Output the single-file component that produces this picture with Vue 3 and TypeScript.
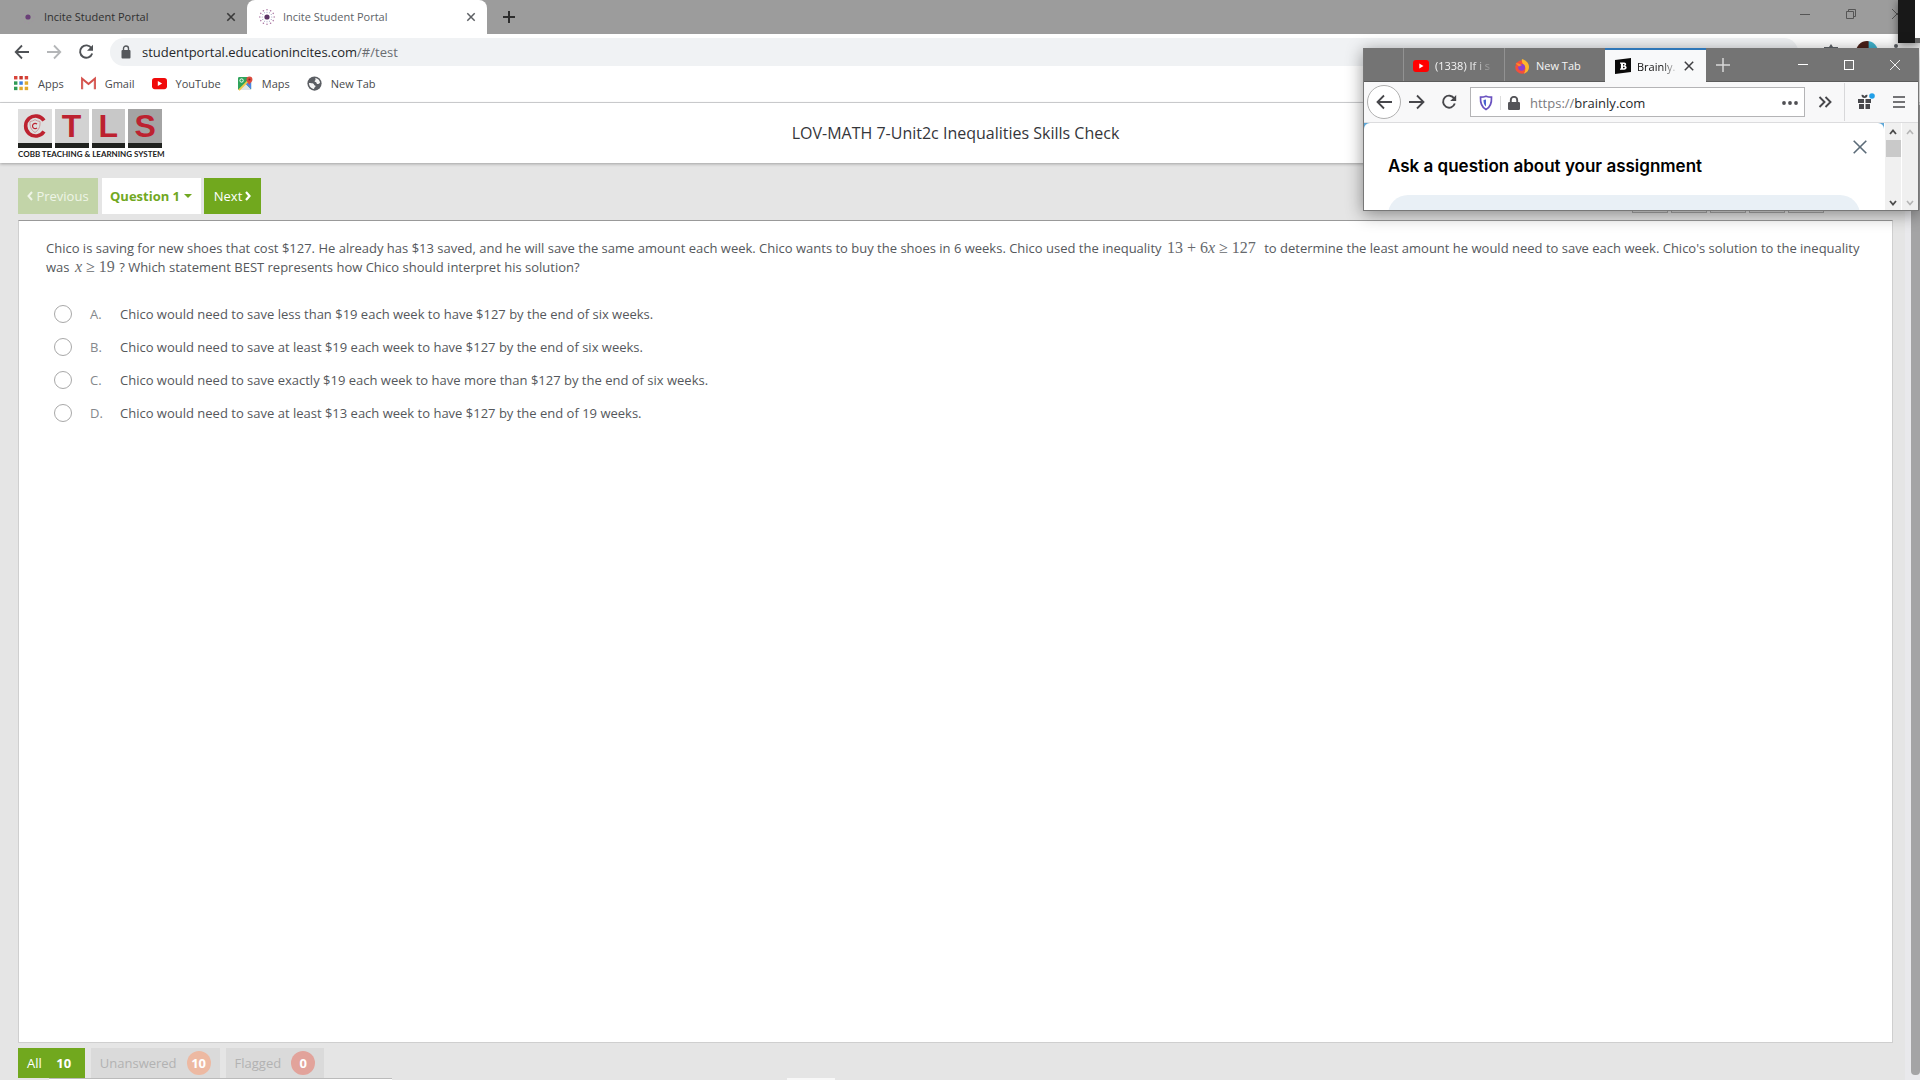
<script setup lang="ts">
import { ref } from 'vue'

interface Choice {
  key: string
  text: string
}

const choices: Choice[] = [
  { key: 'A', text: 'Chico would need to save less than $19 each week to have $127 by the end of six weeks.' },
  { key: 'B', text: 'Chico would need to save at least $19 each week to have $127 by the end of six weeks.' },
  { key: 'C', text: 'Chico would need to save exactly $19 each week to have more than $127 by the end of six weeks.' },
  { key: 'D', text: 'Chico would need to save at least $13 each week to have $127 by the end of 19 weeks.' },
]

const answer = ref<string>('')
const host = ref<string>('studentportal.educationincites.com')
const sideHost = ref<string>('brainly.com')
const question = ref<string>('Question 1')
const appDots: string[] = ['#d9453b', '#c8372d', '#d9453b', '#2f9a55', '#3b7fe0', '#e0a92c', '#2f9a55', '#e0a92c', '#e0a92c']
const ring: number[] = Array.from({ length: 12 }, (_, i) => i * 30)
</script>

<template>
  <div class="screen">
    <header class="chrome">
      <div class="tabs">
        <div class="tab">
          <svg class="fav" viewBox="0 0 18 18"><circle cx="9" cy="9" r="6" fill="none" stroke="#a590a8" stroke-width="1" stroke-dasharray="1 3" /><circle cx="9" cy="9" r="2.6" fill="#6a3f78" /></svg>
          <span class="title">Incite Student Portal</span>
          <button class="x" aria-label="Close tab"><svg viewBox="0 0 10 10"><path d="M1.3 1.3l7.4 7.4M8.7 1.3L1.3 8.7" stroke="#3a3a3a" stroke-width="1.6" /></svg></button>
        </div>
        <div class="tab active">
          <svg class="fav" viewBox="0 0 18 18">
            <g v-for="a in ring" :key="a" :transform="`rotate(${a} 9 9)`"><circle cx="9" cy="1.8" r=".8" fill="#b07fa8" /><circle cx="9" cy="4.2" r=".5" fill="#8d8fb5" /></g>
            <circle cx="9" cy="9" r="2.6" fill="#5d3566" />
          </svg>
          <span class="title">Incite Student Portal</span>
          <button class="x" aria-label="Close tab"><svg viewBox="0 0 10 10"><path d="M1.3 1.3l7.4 7.4M8.7 1.3L1.3 8.7" stroke="#5c5f63" stroke-width="1.5" /></svg></button>
        </div>
        <button class="plus" aria-label="New tab"><svg viewBox="0 0 12 12"><path d="M6 0v12M0 6h12" stroke="#2d2d2d" stroke-width="2" /></svg></button>
        <div class="winbtns">
          <button aria-label="Minimize"><svg width="12" height="12" viewBox="0 0 12 12"><path d="M1 6.500h10" stroke="#555" /></svg></button>
          <button aria-label="Restore"><svg width="12" height="12" viewBox="0 0 12 12" fill="none" stroke="#555"><path d="M1.500 3.500h7v7h-7zM3.500 3.500v-2h7v7h-2" /></svg></button>
          <button aria-label="Close"><svg width="12" height="12" viewBox="0 0 12 12"><path d="M1 1l10 10M11 1L1 11" stroke="#555" /></svg></button>
        </div>
      </div>
      <div class="toolbar">
        <button class="nav" aria-label="Back"><svg viewBox="0 0 16 16" fill="none" stroke="#4f5256" stroke-width="1.8"><path d="M15 8H2M8 1.500L1.700 8 8 14.500" /></svg></button>
        <button class="nav" aria-label="Forward"><svg viewBox="0 0 16 16" fill="none" stroke="#b4b6b8" stroke-width="1.8"><path d="M1 8h13M8 1.500L14.300 8 8 14.500" /></svg></button>
        <button class="nav" aria-label="Reload"><svg viewBox="0 0 16 16" fill="none" stroke="#4f5256" stroke-width="1.9"><path d="M13.500 4.200A6.200 6.200 0 1 0 14.200 9.500" /><path d="M15 .8v6H9z" fill="#4f5256" stroke="none" /></svg></button>
        <div class="omni">
          <svg class="lock" viewBox="0 0 10 14"><rect x="0.5" y="5" width="9" height="8.5" rx="1" fill="#55585c" /><path d="M2.500 6V3.500a2.500 2.500 0 0 1 5 0V6" fill="none" stroke="#55585c" stroke-width="1.4" /></svg>
          <input v-model="host" class="host" aria-label="Address" /><span class="path">/#/test</span>
        </div>
        <div class="ext">
          <svg width="18" height="18" viewBox="0 0 18 18"><path d="M9 1l2 3h5v12H2V4h5z" fill="#5f6368" /></svg>
          <span class="avatar"></span>
          <svg width="4" height="18" viewBox="0 0 4 18" fill="#5f6368"><circle cx="2" cy="3" r="2" /><circle cx="2" cy="9" r="2" /><circle cx="2" cy="15" r="2" /></svg>
        </div>
      </div>
      <nav class="marks">
        <a href="#">
          <svg viewBox="0 0 14 14"><rect v-for="(c, i) in appDots" :key="i" :x="(i % 3) * 5" :y="Math.floor(i / 3) * 5" width="3.2" height="3.2" :fill="c" /></svg>Apps
        </a>
        <a href="#"><svg viewBox="0 0 16 14"><path d="M1.200 13V1.800L8 7.500l6.800-5.700V13" fill="none" stroke="#d5504a" stroke-width="2.2" /><path d="M2.400 4v9M13.600 4v9" stroke="#e8e4e4" stroke-width=".6" /></svg>Gmail</a>
        <a href="#"><svg viewBox="0 0 16 14"><rect y="1" width="16" height="12" rx="3" fill="#f00a0a" /><path d="M6.200 4.300v5.400L10.800 7z" fill="#fff" /></svg>YouTube</a>
        <a href="#">
          <svg viewBox="0 0 16 16"><rect y="1" width="14" height="14" rx="1.5" fill="#2fa35b" /><path d="M1 15L8 8l6 6.500V15z" fill="#dfe3e8" /><path d="M8 8l6 6V5z" fill="#4a83e8" /><path d="M1 15L13 3" stroke="#f2c94a" stroke-width="2" /><circle cx="3.8" cy="4.8" r="1.8" fill="none" stroke="#fff" /><path d="M12 10C11.500 7 9 6.500 9 3.700a3.200 3.200 0 0 1 6.400 0C15.400 6.500 12.500 7 12 10z" fill="#dd4b3e" /><circle cx="12.2" cy="3.7" r="1.1" fill="#8c2a20" /></svg>Maps
        </a>
        <a href="#"><svg viewBox="0 0 16 16"><circle cx="8" cy="8" r="7.6" fill="#5b5e63" /><path d="M9 2.200c3 .5 4.800 2.800 4.900 5.300-1.200.6-2 1.400-3.200.9-.9-.5-.3-1.600-1.600-1.900-1.300-.4-1.200-1.400-.2-1.900.7-.5-.4-1.500.1-2.400z" fill="#f5f5f5" /><path d="M2.100 7.500c1.800.3 3.600-.2 4.800.8.900.7.400 1.700 1.600 1.900 1.100.3.600 1.600-.4 2-.6.300-.3 1.100-.7 1.700C4.400 13.500 2.100 11 2.100 7.500z" fill="#f5f5f5" /></svg>New Tab</a>
      </nav>
    </header>

    <div class="page">
      <main class="portal">
        <div class="brandbar">
          <div class="logo">
            <div class="tiles">
              <span class="tile t1">
                <svg width="24" height="26" viewBox="0 0 24 26" fill="none"><path d="M21 7.500A10 10 0 1 0 21 18.500" stroke="#bd2230" stroke-width="3.6" /><path d="M7 8.500c2-.3 3.500-.8 5-1.800 1.500 1 3 1.500 5 1.800.3 5-1 8.500-5 11-4-2.500-5.300-6-5-11z" stroke="#c9858a" stroke-width=".8" /><path d="M14 11.200a2.600 2.600 0 1 0 0 3.600" stroke="#bd2230" stroke-width="1.2" /></svg>
              </span>
              <span class="tile t2">T</span>
              <span class="tile t3">L</span>
              <span class="tile t4">S</span>
            </div>
            <div class="tagline">COBB TEACHING &amp; LEARNING SYSTEM</div>
          </div>
          <h1>LOV-MATH 7-Unit2c Inequalities Skills Check</h1>
        </div>

        <div class="pager">
          <button class="prev" disabled><svg viewBox="0 0 6 10"><path d="M5 1L1.500 5 5 9" fill="none" stroke="currentColor" stroke-width="2" /></svg>Previous</button>
          <label class="pick">
            <select v-model="question" aria-label="Question"><option>Question 1</option></select>
            <svg viewBox="0 0 8 4"><path d="M0 0h8L4 4z" fill="#71a822" /></svg>
          </label>
          <button class="next">Next<svg viewBox="0 0 6 10"><path d="M1 1l3.500 4L1 9" fill="none" stroke="currentColor" stroke-width="2.2" /></svg></button>
          <div class="tools"><span v-for="n in 5" :key="n"></span></div>
        </div>

        <section class="sheet">
          <p class="stem">
            Chico is saving for new shoes that cost $127. He already has $13 saved, and he will save the same amount each week. Chico wants to buy the shoes in 6 weeks. Chico used the inequality <span class="math wide">13 + 6<i>x</i> ≥ 127</span> to determine the least amount he would need to save each week. Chico's solution to the inequality <wbr />was <span class="math"><i>x</i> ≥ 19</span> ? Which statement BEST represents how Chico should interpret his solution?
          </p>
          <div class="choices">
            <label v-for="c in choices" :key="c.key">
              <input v-model="answer" type="radio" name="answer" :value="c.key" />
              <span class="key">{{ c.key }}.</span>
              <span>{{ c.text }}</span>
            </label>
          </div>
        </section>

        <footer class="filters">
          <button class="all">All <b>10</b></button>
          <button class="dim">Unanswered <b class="orange">10</b></button>
          <button class="dim">Flagged <b class="red">0</b></button>
        </footer>
        <div class="edge"><span class="status"></span><span class="hint"></span></div>
      </main>
      <div class="scroll"><span></span></div>
    </div>

    <div class="strip"></div>

    <aside class="fx">
      <div class="fxtabs">
        <div class="stub"></div>
        <div class="fxtab">
          <svg viewBox="0 0 16 14"><rect y="1" width="16" height="12" rx="3" fill="#f00" /><path d="M6.300 4.500v5L10.500 7z" fill="#fff" /></svg>
          <span class="fade">(1338) If i s</span>
        </div>
        <div class="fxtab">
          <svg viewBox="0 0 16 16"><circle cx="8" cy="9" r="6.8" fill="#f2503c" /><path d="M8 1c3 1 7 3.500 7 8a7 7 0 0 1-5 6.500C12 12 12 8 9 6 8 4.500 7.500 3 8 1z" fill="#fdb52d" /><circle cx="7.6" cy="9.3" r="3.4" fill="#8a3fd1" /><path d="M1.500 5l3 .5L8 7 5 8.500z" fill="#ff8a25" /></svg>
          <span>New Tab</span>
        </div>
        <div class="fxtab on">
          <svg viewBox="0 0 16 16"><path d="M0 2l16-2v14L0 16z" fill="#0a0a0a" /><path d="M5 4.500h4.200c2.500 0 2.500 3 .8 3.300 2.300.3 2.300 3.900-.8 3.900H5v-1.300h.9V5.800H5zM8 6v1.400h.9c.8 0 .8-1.400 0-1.400zM8 8.700v1.600h1c1 0 1-1.600 0-1.600z" fill="#fff" fill-rule="evenodd" /></svg>
          <span class="fade">Brainly.</span>
          <button class="fxx" aria-label="Close tab"><svg viewBox="0 0 10 10"><path d="M.8.8l8.400 8.400M9.200.8L.8 9.200" stroke="#3f3f42" stroke-width="1.5" /></svg></button>
        </div>
        <button class="fxplus" aria-label="New tab"><svg viewBox="0 0 14 14"><path d="M7 0v14M0 7h14" stroke="#d8d8d8" stroke-width="1.5" /></svg></button>
        <div class="fxwin">
          <button aria-label="Minimize"><svg viewBox="0 0 10 10"><path d="M0 4.500h10" stroke="#fff" /></svg></button>
          <button aria-label="Maximize"><svg viewBox="0 0 10 10"><rect x=".5" y=".5" width="9" height="9" fill="none" stroke="#fff" /></svg></button>
          <button aria-label="Close"><svg viewBox="0 0 10 10"><path d="M0 0l10 10M10 0L0 10" stroke="#fff" stroke-width=".9" /></svg></button>
        </div>
      </div>
      <div class="fxbar">
        <button class="back" aria-label="Back"><svg viewBox="0 0 16 16" fill="none" stroke="#47474b" stroke-width="1.8"><path d="M16 8H1.500M8 1.500L1.500 8 8 14.500" /></svg></button>
        <button class="fxnav" aria-label="Forward"><svg viewBox="0 0 16 16" fill="none" stroke="#47474b" stroke-width="1.8"><path d="M0 8h14.500M8 1.500L14.500 8 8 14.500" /></svg></button>
        <button class="fxnav" aria-label="Reload"><svg viewBox="0 0 16 16" fill="none" stroke="#47474b" stroke-width="1.9"><path d="M13.200 4.500A6 6 0 1 0 13.800 9.500" /><path d="M15.200 1v6h-6z" fill="#47474b" stroke="none" /></svg></button>
        <div class="fxurl">
          <svg class="shield" viewBox="0 0 14 16"><path d="M7 1.200c2 .8 3.800 1 5.500 1 .3 6-1 10-5.500 12.300C2.500 12.200 1.200 8.200 1.500 2.200 3.200 2.200 5 2 7 1.200z" fill="none" stroke="#6a52c0" stroke-width="1.7" /><path d="M7 4.500v7C5 10 4.500 8 4.500 5c1 0 1.700-.2 2.500-.5z" fill="#4a63d0" /></svg>
          <svg class="fxlock" viewBox="0 0 12 14"><rect y="6" width="12" height="8" rx="1.2" fill="#555559" /><path d="M2.800 7V4a3.200 3.200 0 0 1 6.400 0v3" fill="none" stroke="#555559" stroke-width="1.9" /></svg>
          <span class="scheme">https://</span><input v-model="sideHost" class="fxhost" aria-label="Address" />
          <svg class="dots" viewBox="0 0 16 4" fill="#505054"><circle cx="2" cy="2" r="1.9" /><circle cx="8" cy="2" r="1.9" /><circle cx="14" cy="2" r="1.9" /></svg>
        </div>
        <button class="more" aria-label="More tools"><svg viewBox="0 0 14 12" fill="none" stroke="#47474b" stroke-width="1.9"><path d="M1.500 1L6.500 6l-5 5M7.500 1l5 5-5 5" /></svg></button>
        <button class="gift" aria-label="What's new"><svg viewBox="0 0 18 18"><path d="M1 6h6v4H1zM8.500 6h5.500v4H8.500zM2 11h5v5H2zM8.500 11H13v5H8.500zM4.500 2C6 1.500 7 2.500 7.500 3.500 8 2.500 9 1.500 10.500 2 10.500 4 9.500 5 7.500 5S4.500 4 4.500 2z" fill="#47474b" /><circle cx="15" cy="3" r="2.8" fill="#22a0e8" /></svg></button>
        <button class="menu" aria-label="Menu"><svg viewBox="0 0 12 12"><path d="M0 1h12M0 6h12M0 11h12" stroke="#47474b" stroke-width="1.7" /></svg></button>
      </div>
      <div class="fxpage">
        <div class="ask">
          <div class="askhead">
            <h2>Ask a question about your assignment</h2>
            <button aria-label="Close"><svg viewBox="0 0 14 14"><path d="M.7.7l12.600 12.600M13.300.7L.7 13.300" stroke="#5b6b78" stroke-width="1.6" /></svg></button>
          </div>
          <div class="field"></div>
        </div>
        <div class="sb">
          <svg viewBox="0 0 8 6"><path d="M1 5l3-3.500L7 5" fill="none" stroke="#4c4c4c" stroke-width="1.8" /></svg>
          <span class="thumb"></span>
          <svg class="down" viewBox="0 0 8 6"><path d="M1 1l3 3.500L7 1" fill="none" stroke="#4c4c4c" stroke-width="1.8" /></svg>
        </div>
        <div class="sb">
          <svg viewBox="0 0 8 6"><path d="M1 5l3-3.500L7 5" fill="none" stroke="#b5b5b5" stroke-width="1.6" /></svg>
          <svg class="down" viewBox="0 0 8 6"><path d="M1 1l3 3.500L7 1" fill="none" stroke="#b5b5b5" stroke-width="1.6" /></svg>
        </div>
      </div>
    </aside>
  </div>
</template>

<style>
body {
  background: #e5e5e5;
}
</style>

<style scoped>
.screen,
.screen * {
  box-sizing: border-box;
}
.screen {
  position: relative;
  display: flex;
  flex-direction: column;
  min-height: 100vh;
  overflow: hidden;
  font-family: "Open Sans", "Noto Sans", sans-serif;
  color: #55585c;
}
button,
input,
select {
  font: inherit;
  color: inherit;
  border: 0;
  padding: 0;
  margin: 0;
  background: none;
}
button {
  display: flex;
  align-items: center;
  justify-content: center;
}
svg {
  display: block;
  flex: none;
}

/* main browser */
.chrome {
  background: #fff;
  border-bottom: 1px solid #d3d4d6;
}
.tabs {
  display: flex;
  height: 34px;
  background: #9c9c9c;
}
.tab {
  display: flex;
  align-items: center;
  width: 240px;
  padding: 0 10px 1px 19px;
  font-size: 11px;
  color: #303030;
}
.tab:first-child {
  width: 247px;
}
.fav {
  width: 18px;
  height: 18px;
  margin-right: 7px;
}
.tab.active {
  padding-left: 11px;
  background: #fff;
  border-radius: 8px 8px 0 0;
  color: #606367;
}
.title {
  flex: 1;
}
.x svg {
  width: 10px;
  height: 10px;
}
.x {
  width: 12px;
}
.plus {
  width: 44px;
}
.plus svg {
  width: 12px;
  height: 12px;
}
.winbtns {
  display: flex;
  margin-left: auto;
  padding-bottom: 6px;
}
.winbtns button {
  width: 46px;
}
.toolbar {
  display: flex;
  align-items: center;
  height: 36px;
  padding-left: 14px;
}
.nav {
  width: 16px;
  margin-right: 16px;
}
.nav svg {
  width: 16px;
  height: 16px;
}
.omni {
  flex: 1;
  display: flex;
  align-items: center;
  height: 28px;
  margin-right: 24px;
  padding-left: 11px;
  border-radius: 14px;
  background: #f0f2f4;
  font-size: 13px;
}
.lock {
  width: 10px;
  height: 14px;
  margin-right: 11px;
}
.host,
.fxhost {
  field-sizing: content;
  color: #26282b;
}
.path {
  color: #6a6d71;
}
.ext {
  display: flex;
  align-items: center;
  gap: 16px;
  padding: 0 22px 0 0;
}
.avatar {
  width: 22px;
  height: 22px;
  border-radius: 50%;
  background: linear-gradient(90deg, #4a2018 55%, #3fb2cc 60%);
}
.marks {
  display: flex;
  gap: 17px;
  height: 32px;
  padding: 0 14px 5px;
  align-items: center;
}
.marks a {
  display: flex;
  align-items: center;
  gap: 9px;
  font-size: 11px;
  color: #47494c;
  text-decoration: none;
}
.marks svg {
  width: 15px;
  height: 15px;
}

/* portal page */
.page {
  flex: 1;
  display: flex;
  background: #e5e5e5;
}
.portal {
  flex: 1;
  display: flex;
  flex-direction: column;
}
.brandbar {
  display: grid;
  grid-template-columns: 1fr auto 1fr;
  align-items: center;
  height: 60px;
  padding: 0 12px 0 18px;
  background: #fff;
  box-shadow: 0 1px 3px rgba(0, 0, 0, 0.3);
}
.logo {
  width: 144px;
  padding-top: 2px;
}
.tiles {
  display: flex;
  gap: 3px;
}
.tile {
  flex: 1;
  display: flex;
  align-items: center;
  justify-content: center;
  height: 39px;
  border-bottom: 5px solid #20221f;
  font-family: "Liberation Sans Narrow", "Liberation Sans", sans-serif;
  font-size: 32px;
  line-height: 34px;
  font-weight: 700;
  color: #bd2230;
}
.t1 { background: #dedede; }
.t2 { background: #d2d2d2; }
.t3 { background: #c8c8c8; }
.t4 { background: #a4a4a4; }
.tagline {
  font-family: Lato, sans-serif;
  font-size: 8px;
  line-height: 12px;
  font-weight: 700;
  color: #222;
  white-space: nowrap;
}
h1 {
  margin: 0;
  font-size: 16px;
  font-weight: 400;
  color: #35363a;
}
.pager {
  display: flex;
  height: 57px;
  padding: 15px 81px 6px 18px;
  font-size: 13px;
}
.prev {
  gap: 3px;
  width: 80px;
  background: #c2d4a8;
  color: #eef4e6;
}
.pager button svg {
  width: 6px;
  height: 10px;
}
.pick {
  display: flex;
  align-items: center;
  gap: 4px;
  width: 99px;
  margin: 0 3px 0 4px;
  padding-left: 8px;
  background: #fff;
}
.pick select {
  appearance: none;
  field-sizing: content;
  font-weight: 700;
  color: #71a822;
}
.pick svg {
  width: 8px;
  height: 4px;
}
.next {
  gap: 3px;
  width: 57px;
  background: #71a81e;
  color: #fff;
}
.tools {
  display: flex;
  gap: 3px;
  margin-left: auto;
}
.tools span {
  width: 36px;
  height: 35px;
  border: 1px solid #aaa;
  background: #ddd;
}
.sheet {
  flex: 1;
  margin: 0 12px 0 18px;
  padding: 18px 27px;
  background: #fff;
  border: 1px solid #cfcfcf;
  border-top-color: #999;
  font-size: 13px;
}
.stem {
  margin: 0;
  line-height: 19px;
}
.math {
  padding: 0 1px 0 2px;
  font-family: "Liberation Serif", serif;
  font-size: 16px;
  line-height: 16px;
  color: #66696d;
}
.math.wide {
  padding-right: 5px;
}
.choices {
  display: flex;
  flex-direction: column;
  padding: 20px 0 0 8px;
}
.choices label {
  display: flex;
  align-items: center;
  height: 33px;
}
.choices input {
  appearance: none;
  width: 18px;
  height: 18px;
  margin-right: 18px;
  border: 1px solid #a8a8a8;
  border-radius: 50%;
}
.choices input:checked {
  border: 5px solid #71a81e;
}
.key {
  width: 30px;
  color: #85888c;
}
.filters {
  display: flex;
  gap: 6px;
  padding: 5px 18px 0;
  font-size: 13px;
}
.filters button {
  height: 30px;
  gap: 10px;
  padding: 0 9px;
  background: #dadada;
  color: #b2b2b2;
}
.filters b {
  width: 24px;
  line-height: 24px;
  border-radius: 50%;
  text-align: center;
  color: #fff;
}
.filters .all {
  background: #71a81e;
  color: #fff;
}
.orange { background: #edb9a2; }
.red { background: #e2a39b; }
.edge {
  display: flex;
  height: 2px;
}
.status {
  width: 343px;
  margin-left: 49px;
  border-top: 1px solid #bbb;
  background: #fff;
}
.hint {
  width: 48px;
  margin-left: 395px;
  background: #f8f8f8;
}
.scroll {
  width: 15px;
  padding: 2px 0 5px 6px;
  background: #e9e9ec;
}
.scroll span {
  display: block;
  height: 100%;
  background: #a4a4a5;
  border-radius: 0 0 4px 4px;
}
.strip {
  position: absolute;
  top: 0;
  right: 0;
  width: 22px;
  height: 43px;
  border-left: 17px solid #181818;
  background: linear-gradient(#fff 38px, #666 38px);
  box-shadow: 0 2px 8px rgba(0, 0, 0, 0.5);
}

/* floating browser */
.fx {
  position: absolute;
  top: 48px;
  right: 1px;
  width: 556px;
  border: 1px solid #777;
  border-top: 0;
  background: #fff;
  box-shadow: 0 3px 16px rgba(0, 0, 0, 0.42);
}
.fxtabs {
  display: flex;
  height: 34px;
  background: #747474;
  border-bottom: 1px solid #5c5c5c;
}
.stub {
  width: 39px;
}
.fxtab {
  display: flex;
  align-items: center;
  gap: 6px;
  width: 101px;
  padding: 2px 9px 0;
  border-left: 1px solid #929292;
  font-size: 11px;
  color: #f5f5f5;
}
.fxtab svg {
  width: 16px;
  height: 16px;
}
.fxtab.on {
  height: 34px;
  background: #f8f9fa;
  border-top: 2px solid #2f77b8;
  border-left: 0;
  color: #111;
  padding: 0 12px 0 10px;
}
.fade {
  flex: 1;
  overflow: hidden;
  white-space: nowrap;
  mask-image: linear-gradient(90deg, #000 60%, transparent);
}
.fxtab .fxx svg {
  width: 10px;
  height: 10px;
}
.fxplus {
  width: 34px;
}
.fxplus svg {
  width: 14px;
  height: 14px;
}
.fxwin {
  display: flex;
  margin-left: auto;
}
.fxwin button {
  width: 46px;
}
.fxwin svg {
  width: 10px;
  height: 10px;
}
.fxbar {
  display: flex;
  align-items: center;
  height: 41px;
  padding: 0 7px 0 3px;
  background: #f8f8f9;
  border-bottom: 1px solid #dcdcde;
}
.back {
  width: 34px;
  height: 34px;
  border: 1px solid #b0b0b0;
  border-radius: 50%;
  background: #fff;
}
.back svg,
.fxnav svg {
  width: 16px;
  height: 16px;
}
.fxnav {
  width: 32px;
}
.fxurl {
  flex: 1;
  display: flex;
  align-items: center;
  height: 30px;
  margin-left: 5px;
  padding: 1px 6px 0 8px;
  border: 1px solid #b4b4b6;
  background: #fff;
  font-size: 13px;
}
.shield {
  width: 14px;
  height: 16px;
}
.fxlock {
  width: 24px;
  height: 14px;
  margin: 0 6px 0 7px;
  padding-left: 3px;
  border-left: 1px solid #ddd;
}
.scheme {
  color: #7b7b7e;
}
.dots {
  width: 16px;
  height: 4px;
  margin-left: auto;
}
.more {
  width: 40px;
  height: 38px;
  border-right: 1px solid #d8d8da;
}
.more svg {
  width: 14px;
  height: 12px;
}
.gift {
  width: 42px;
}
.gift svg {
  width: 18px;
  height: 18px;
}
.menu {
  width: 24px;
}
.menu svg {
  width: 12px;
  height: 12px;
}
.fxpage {
  display: flex;
  height: 87px;
  background: #5fa8d8;
}
.ask {
  flex: 1;
  display: flex;
  flex-direction: column;
  overflow: hidden;
  padding-top: 15px;
  border-radius: 6px 6px 0 0;
  background: #fff;
}
.askhead {
  flex: none;
  display: flex;
  justify-content: space-between;
  height: 57px;
  padding: 0 17px 0 24px;
}
h2 {
  margin: 0;
  padding-top: 16px;
  font-family: Inter, sans-serif;
  font-size: 17px;
  line-height: 24px;
  font-weight: 600;
  color: #000;
  white-space: nowrap;
}
.askhead button {
  height: 18px;
}
.askhead svg {
  width: 14px;
  height: 14px;
}
.field {
  flex: none;
  height: 30px;
  margin: 0 24px;
  border-radius: 20px 20px 0 0;
  background: #e9f0f6;
}
.sb {
  display: flex;
  flex-direction: column;
  align-items: center;
  width: 17px;
  padding: 6px 0 4px;
  background: #f0f0f0;
  border-left: 1px solid #fff;
}
.sb svg {
  width: 8px;
  height: 6px;
}
.thumb {
  width: 15px;
  height: 17px;
  margin-top: 5px;
  background: #c9c9c9;
}
.sb .down {
  margin-top: auto;
}
</style>
